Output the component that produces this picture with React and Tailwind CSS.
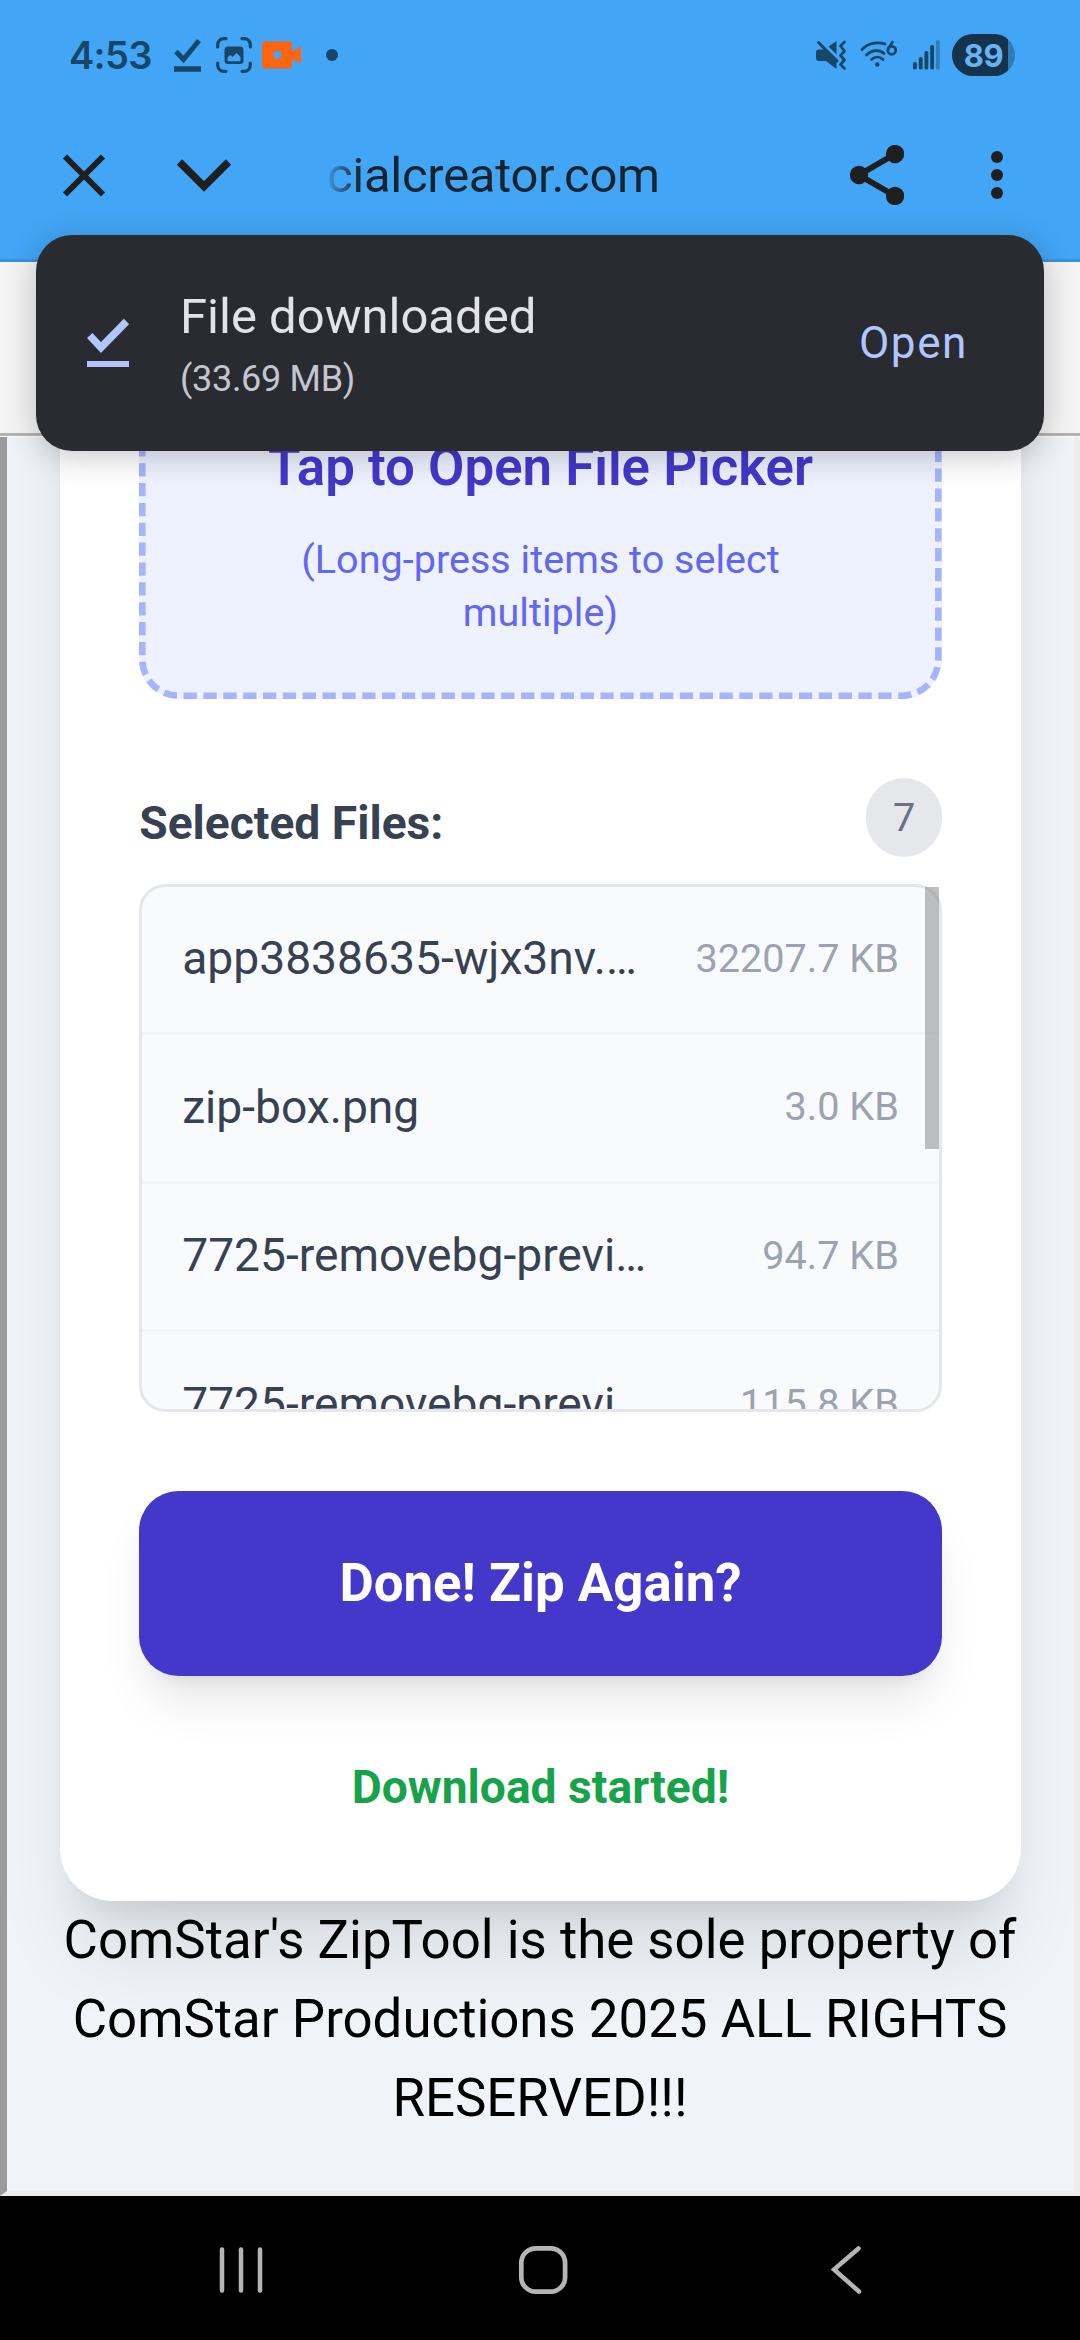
const files = [
  { name: 'app3838635-wjx3nv.…', size: '32207.7 KB' },
  { name: 'zip-box.png', size: '3.0 KB' },
  { name: '7725-removebg-previ…', size: '94.7 KB' },
  { name: '7725-removebg-previ…', size: '115.8 KB' },
];

function StatusBar() {
  return (
    <div className="flex h-[110px] items-center pl-[69px] pr-[65px] text-[#174668]">
      <span className="w-[105px] font-[Inter] text-[38px] font-semibold leading-none tracking-[-0.7px]">4:53</span>
      <svg className="h-[36px] w-[27px] shrink-0" viewBox="0 0 27 36" fill="none" stroke="currentColor">
        <path d="M2 14.5l7.5 8L25 3.500" strokeWidth="5" />
        <path d="M0 32h27" strokeWidth="5.500" />
      </svg>
      <svg className="ml-[15px] h-[36px] w-[36px] shrink-0" viewBox="0 0 36 36" fill="none" stroke="currentColor">
        <path d="M1.700 10V7.700a6 6 0 0 1 6-6H10M26 1.700h2.300a6 6 0 0 1 6 6V10M34.300 26v2.300a6 6 0 0 1-6 6H26M10 34.300H7.700a6 6 0 0 1-6-6V26" strokeWidth="3.200" strokeLinecap="round" />
        <path fillRule="evenodd" stroke="none" fill="currentColor" d="M12 9.500h12a3.500 3.500 0 0 1 3.500 3.500v10.500a3.500 3.500 0 0 1-3.500 3.500H12a3.500 3.500 0 0 1-3.500-3.500V13A3.500 3.500 0 0 1 12 9.500zM11.500 20.500V23a1.200 1.200 0 0 0 1.200 1.200h10.600a1.200 1.200 0 0 0 1.200-1.200v-3l-4-4-4 4-2-2z" />
      </svg>
      <svg className="ml-[10px] h-[28px] w-[40px] shrink-0" viewBox="0 0 40 28" fill="#ff6510">
        <path fillRule="evenodd" d="M2 .500h26a2 2 0 0 1 2 2v8L39 5.500v17l-9-4.500v7.500a2 2 0 0 1-2 2H2a2 2 0 0 1-2-2v-23a2 2 0 0 1 2-2zM15.500 10a4 4 0 1 0 0 8 4 4 0 0 0 0-8z" />
      </svg>
      <div className="ml-[24px] h-[12px] w-[12px] rounded-full bg-[#174668]" />
      <div className="flex-1" />
      <svg className="h-[30px] w-[30px] shrink-0" viewBox="0 0 30 30" fill="currentColor">
        <path d="M3 9.500h6.500L20.500 20.500V29L10 21H3a3 3 0 0 1-3-3v-5.500a3 3 0 0 1 3-3zM20.500 1v13.500L12.500 6.500z" />
        <path d="M2.500 2.500L21 21" stroke="currentColor" strokeWidth="3" strokeLinecap="round" />
        <path d="M28.500 2l-4 4 4 5-4 4.500 4 4.500-4 4.500 4 4" stroke="currentColor" strokeWidth="2.700" fill="none" strokeLinecap="round" strokeLinejoin="round" />
      </svg>
      <svg className="ml-[14px] h-[30px] w-[38px] shrink-0" viewBox="0 0 38 30" fill="none" stroke="currentColor" strokeWidth="2.800" strokeLinecap="round">
        <path d="M2 9.500C8 3 17 1.500 25 4M6.500 15c5-5 12.500-6 17.500-1.500M11.500 19.500c3.500-3.200 8-3.200 11.500 0" />
        <circle cx="17.300" cy="24.500" r="2.200" fill="currentColor" stroke="none" />
        <circle cx="31.800" cy="10.300" r="4" />
        <path d="M32.500 2.200L28.300 8.500" />
      </svg>
      <svg className="ml-[15px] h-[30px] w-[28px] shrink-0" viewBox="0 0 28 30" fill="currentColor">
        <rect x="0" y="22" width="3.800" height="7.500" rx="1.500" />
        <rect x="5.800" y="17" width="3.800" height="12.500" rx="1.500" />
        <rect x="11.500" y="11" width="3.800" height="18.500" rx="1.500" />
        <rect x="17.200" y="5" width="3.800" height="24.500" rx="1.500" />
        <rect x="23" y="0" width="3.800" height="29.500" rx="1.500" opacity=".4" />
      </svg>
      <div className="ml-[11px] flex h-[42px] w-[63px] overflow-hidden rounded-full bg-[#2f7ab8]">
        <div className="flex w-[56px] items-center justify-center bg-[#15334a] pl-[7px] font-[Inter] text-[31px] font-bold leading-none tracking-[-0.5px] text-[#64b4f7]">89</div>
      </div>
    </div>
  );
}

function Toolbar() {
  return (
    <div className="flex h-[152px] items-start border-b-[3px] border-[#3a92d9] pl-[62px] pt-[35px] text-[#1f1f1f]">
      <svg className="h-[60px] w-[44px] shrink-0" viewBox="0 0 44 60" fill="none" stroke="currentColor" strokeWidth="6">
        <path d="M3 11.500l38 38M41 11.500l-38 38" />
      </svg>
      <svg className="ml-[70px] h-[60px] w-[56px] shrink-0" viewBox="0 0 56 60" fill="none" stroke="currentColor" strokeWidth="7.500">
        <path d="M3.500 17L28 41.500 52.500 17" />
      </svg>
      <div className="ml-[95px] mt-px w-[342px] whitespace-nowrap bg-gradient-to-r from-[#42a5f5] from-[-1%] to-[#17242e] to-[10%] bg-clip-text font-[Roboto] text-[49px] leading-[60px] tracking-[-0.3px] text-transparent">cialcreator.com</div>
      <svg className="ml-[179px] h-[60px] w-[56px] shrink-0" viewBox="0 0 56 60" fill="currentColor">
        <path d="M47 9L11 30l36 21" fill="none" stroke="currentColor" strokeWidth="6" />
        <circle cx="11" cy="30" r="9.200" />
        <circle cx="47" cy="9" r="9.200" />
        <circle cx="47" cy="51" r="9.200" />
      </svg>
      <div className="ml-[87px] mt-[6px] flex flex-col gap-[6px]">
        <div className="h-[12px] w-[12px] rounded-full bg-[#1f1f1f]" />
        <div className="h-[12px] w-[12px] rounded-full bg-[#1f1f1f]" />
        <div className="h-[12px] w-[12px] rounded-full bg-[#1f1f1f]" />
      </div>
    </div>
  );
}

function Snackbar() {
  return (
    <div className="absolute left-[36px] top-[235px] flex h-[216px] w-[1008px] items-center rounded-[36px] bg-[#2a2b30] pl-[51px] pr-[76px] font-[Roboto] shadow-[0_6px_32px_rgba(0,0,0,0.22)]">
      <svg className="h-[50px] w-[42px] shrink-0" viewBox="0 0 42 50" fill="none" stroke="#b1c5ff">
        <path d="M2.700 17.500L14 29.500 39.500 3.500" strokeWidth="7.500" />
        <path d="M0 46h42" strokeWidth="6" />
      </svg>
      <div className="ml-[51px] mt-[4px] flex-1">
        <div className="text-[49px] leading-[58px] text-[#e3e2e9]">File downloaded</div>
        <div className="mt-[10px] text-[36px] leading-[46px] tracking-[-0.3px] text-[#c5c5d0]">(33.69 MB)</div>
      </div>
      <div className="text-[44px] leading-none tracking-[1.6px] text-[#b1c5ff]">Open</div>
    </div>
  );
}

function DropZone() {
  return (
    <div className="relative flex h-[462px] flex-col items-center justify-end rounded-[39.6px] bg-[#eef2ff] pb-[59px] text-center">
      <svg className="absolute bottom-0 left-0 h-[262px] w-full" viewBox="0 0 803 262" preserveAspectRatio="none" fill="none" stroke="#a5b4fc" strokeWidth="6.600">
        <path d="M3.300 6.300V222.400a36.300 36.300 0 0 0 36.300 36.300H763.400a36.300 36.300 0 0 0 36.300-36.300V0" strokeDasharray="13.260 6.600" />
      </svg>
      <div className="text-[52.8px] font-semibold leading-[79.2px] text-[#4338ca]">Tap to Open File Picker</div>
      <div className="mt-[27px] text-[39.6px] leading-[52.8px] text-[#6366f1]">
        (Long-press items to select
        <br />
        multiple)
      </div>
    </div>
  );
}

function FileList() {
  return (
    <div className="relative h-[528px] overflow-hidden rounded-[26.4px] border-[3px] border-gray-200 bg-[#f9fafc]">
      {files.map((f, i) => (
        <div key={i} className="flex h-[148.5px] items-center justify-between border-b-[3px] border-[#f3f4f6] px-[40px]">
          <span className="-mt-[2px] text-[46.2px] leading-[66px] text-[#374151]">{f.name}</span>
          <span className="text-[39.6px] leading-[52.8px] text-[#9ca3af]">{f.size}</span>
        </div>
      ))}
    </div>
  );
}

function Page() {
  return (
    <div className="relative h-[1759px] overflow-hidden border-b-[5px] border-l-[7px] border-r-[6px] border-b-[#ededed] border-l-[#9a9a9a] border-r-[#ededed] bg-[#f0f4f9] font-[Roboto]">
      <div className="ml-[53px] -mt-[200px] h-[1664px] w-[961px] rounded-[52.8px] bg-white px-[79.2px] shadow-[0_66px_82px_-16px_rgba(0,0,0,0.1),0_26px_33px_-20px_rgba(0,0,0,0.1)]">
        <DropZone />
        <div className="mt-[79px] flex h-[79.2px] items-center justify-between">
          <span className="mt-[10px] text-[46.2px] font-bold leading-[66px] text-[#374151]">Selected Files:</span>
          <span className="flex h-[79.2px] w-[75.600px] items-center justify-center rounded-full bg-gray-200 text-[39.6px] text-gray-500">7</span>
        </div>
        <div className="relative mt-[26.4px]">
          <FileList />
          <div className="absolute right-[3px] top-[3px] h-[262px] w-[14px] bg-[#808080]/50" />
        </div>
        <div className="mt-[79.2px] flex h-[184.8px] items-center justify-center rounded-[39.6px] bg-[#4338ca] text-[52.8px] font-bold text-white shadow-[0_33px_50px_-10px_rgba(0,0,0,0.1),0_13px_20px_-13px_rgba(0,0,0,0.1)]">Done! Zip Again?</div>
        <div className="mt-[78px] text-center text-[46.2px] font-bold leading-[66px] text-[#16a34a]">Download started!</div>
      </div>
      <div className="relative ml-[-7px] mr-[-6px] text-center text-[52.8px] leading-[79.2px] text-black">
        ComStar's ZipTool is the sole property of
        <br />
        ComStar Productions 2025 ALL RIGHTS
        <br />
        RESERVED!!!
      </div>
    </div>
  );
}

function NavBar() {
  return (
    <div className="flex flex-1 items-center bg-black pl-[219px] pt-[4px]">
      <svg className="h-[48px] w-[44px]" viewBox="0 0 44 48" fill="none" stroke="#b5b5b5" strokeWidth="4.500" strokeLinecap="round">
        <path d="M3 3.500v41M22 3.500v41M41 3.500v41" />
      </svg>
      <svg className="ml-[255px] h-[50px] w-[50px]" viewBox="0 0 50 50" fill="none" stroke="#b5b5b5" strokeWidth="4.700">
        <rect x="3.300" y="3.300" width="43.800" height="43.400" rx="14.500" />
      </svg>
      <svg className="ml-[262px] h-[50px] w-[34px]" viewBox="0 0 34 50" fill="none" stroke="#b5b5b5" strokeWidth="4.500" strokeLinecap="round">
        <path d="M28.500 3.500L4 24.500l25 22" />
      </svg>
    </div>
  );
}

export default function App() {
  return (
    <div className="relative flex h-[2340px] w-[1080px] flex-col overflow-hidden bg-[#42a5f5]">
      <StatusBar />
      <Toolbar />
      <div className="h-[175px] shrink-0 border-b border-white bg-[#f3f3f3]">
        <div className="h-[174px] border-b-[3px] border-[#b3b3b3]" />
      </div>
      <Page />
      <NavBar />
      <Snackbar />
    </div>
  );
}
